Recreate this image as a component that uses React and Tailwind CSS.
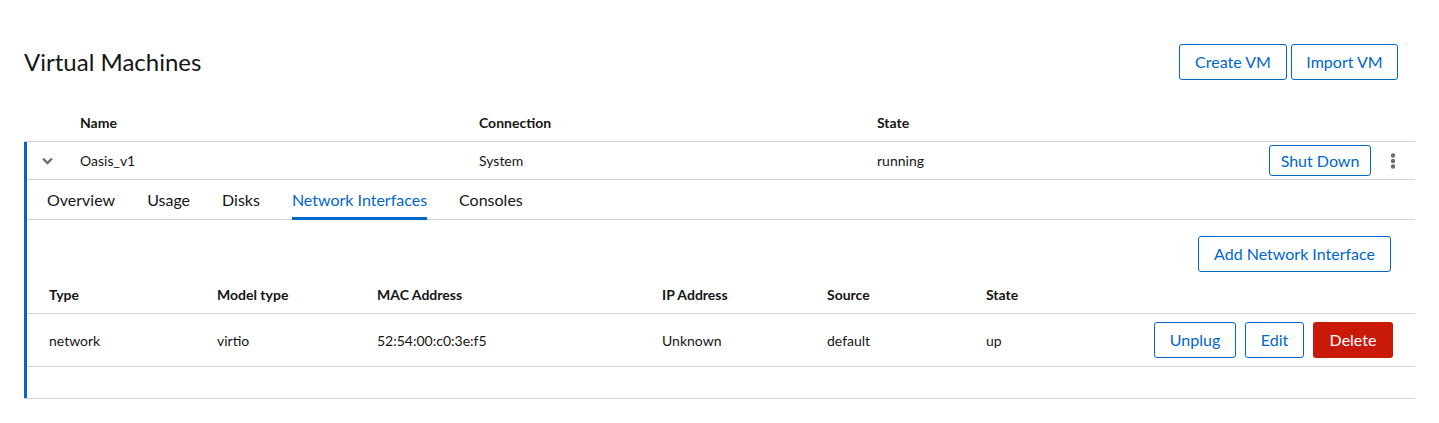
import React from "react";

const font = { fontFamily: "Lato, 'Liberation Sans', sans-serif" };

function OutlineButton({ children, className = "" }) {
  return (
    <button className={`border border-[#0066cc] rounded-[3px] text-[#0066cc] text-[16px] bg-white ${className}`}>
      {children}
    </button>
  );
}

function Chevron() {
  return (
    <svg width="11" height="8" viewBox="0 0 11 8">
      <path d="M1 1.5 L5.5 6 L10 1.5" fill="none" stroke="#6a6e73" strokeWidth="2.4" />
    </svg>
  );
}

function Kebab() {
  return (
    <svg width="6" height="16" viewBox="0 0 6 16">
      <circle cx="3" cy="2.5" r="2.2" fill="#6a6e73" />
      <circle cx="3" cy="8" r="2.2" fill="#6a6e73" />
      <circle cx="3" cy="13.5" r="2.2" fill="#6a6e73" />
    </svg>
  );
}

const tabs = ["Overview", "Usage", "Disks", "Network Interfaces", "Consoles"];

export default function App() {
  return (
    <div className="bg-white w-[1439px] h-[423px] text-[#151515]" style={font}>
      <div className="px-6 pt-[44px]">
        <div className="flex items-center justify-between pr-[17px]">
          <h1 className="text-[24px] leading-[36px] font-normal">Virtual Machines</h1>
          <div className="flex gap-1">
            <OutlineButton className="w-[108px] h-[36px]">Create VM</OutlineButton>
            <OutlineButton className="w-[107px] h-[36px]">Import VM</OutlineButton>
          </div>
        </div>

        <div className="mt-6 w-[1391px]">
          <div className="flex h-[38px] items-center text-[14px] font-bold border-b border-[#d2d2d2]">
            <div className="w-[56px]" />
            <div className="w-[399px]">Name</div>
            <div className="w-[398px]">Connection</div>
            <div>State</div>
          </div>

          <div className="border-l-[3px] border-[#0066cc]">
            <div className="flex h-[38px] items-center text-[14px] border-b border-[#d2d2d2]">
              <div className="w-[53px] pl-[15px] flex items-center"><Chevron /></div>
              <div className="w-[399px]">Oasis_v1</div>
              <div className="w-[398px]">System</div>
              <div className="flex-1">running</div>
              <OutlineButton className="w-[102px] h-[31px]">Shut Down</OutlineButton>
              <div className="w-[44px] flex justify-center"><Kebab /></div>
            </div>

            <div className="flex h-[40px] items-stretch border-b border-[#d2d2d2] pl-[20px] text-[16px]">
              {tabs.map((t) => (
                <div
                  key={t}
                  className={`flex items-center mr-8 mb-[-1px] ${t === "Network Interfaces" ? "text-[#0066cc] border-b-[3px] border-[#0066cc] pt-[3px]" : "text-[#151515]"}`}
                >
                  {t}
                </div>
              ))}
            </div>

            <div className="flex justify-end pt-[16px] pr-[24px]">
              <OutlineButton className="w-[193px] h-[36px]">Add Network Interface</OutlineButton>
            </div>

            <div className="flex h-[42px] items-end pb-[8px] text-[14px] leading-[20px] font-bold border-b border-[#d2d2d2] pl-[22px]">
              <div className="w-[168px]">Type</div>
              <div className="w-[160px]">Model type</div>
              <div className="w-[285px]">MAC Address</div>
              <div className="w-[165px]">IP Address</div>
              <div className="w-[159px]">Source</div>
              <div>State</div>
            </div>
            <div className="flex h-[53px] items-center text-[14px] border-b border-[#d2d2d2] pl-[22px] pr-[22px]">
              <div className="w-[168px]">network</div>
              <div className="w-[160px]">virtio</div>
              <div className="w-[285px]">52:54:00:c0:3e:f5</div>
              <div className="w-[165px]">Unknown</div>
              <div className="w-[159px]">default</div>
              <div className="flex-1">up</div>
              <div className="flex gap-[9px]">
                <OutlineButton className="w-[82px] h-[36px]">Unplug</OutlineButton>
                <OutlineButton className="w-[59px] h-[36px]">Edit</OutlineButton>
                <button className="w-[80px] h-[36px] rounded-[3px] bg-[#c9190b] text-white text-[16px]">Delete</button>
              </div>
            </div>
            <div className="h-[31px]" />
          </div>
          <div className="border-b border-[#d2d2d2]" />
        </div>
      </div>
    </div>
  );
}
